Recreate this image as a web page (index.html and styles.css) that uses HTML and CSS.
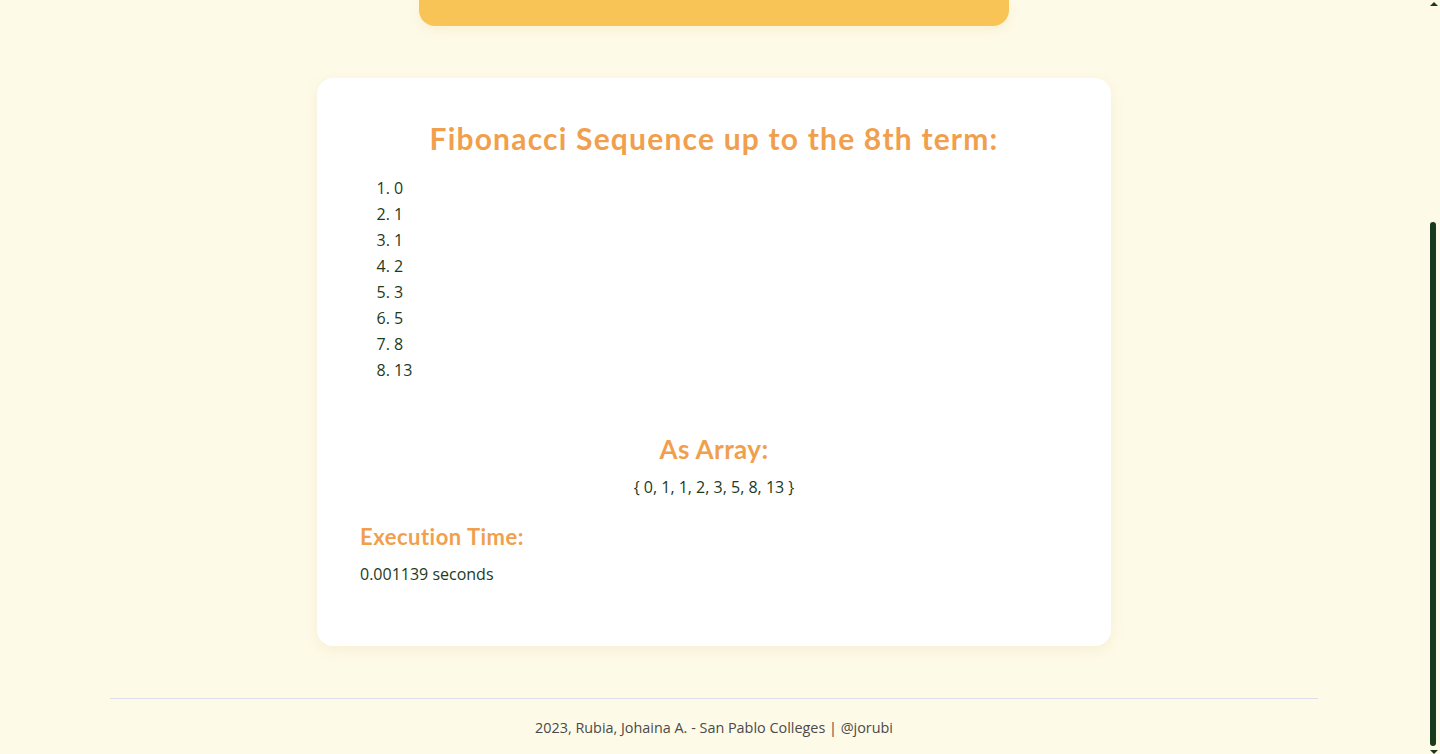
FILE: index.html
```html
<!DOCTYPE html>
<html lang="en">
<head>
<meta charset="utf-8">
<title>Fibonacci</title>
<link rel="stylesheet" href="styles.css">
</head>
<body>
<div class="page">
  <div class="banner"></div>
  <main class="card">
    <h2 class="title">Fibonacci Sequence up to the 8th term:</h2>
    <ol class="seq">
      <li>0</li>
      <li>1</li>
      <li>1</li>
      <li>2</li>
      <li>3</li>
      <li>5</li>
      <li>8</li>
      <li>13</li>
    </ol>
    <h3 class="sub">As Array:</h3>
    <p class="array">{ 0, 1, 1, 2, 3, 5, 8, 13 }</p>
    <h4 class="exec">Execution Time:</h4>
    <p class="time">0.001139 seconds</p>
  </main>
  <footer class="footer">
    <p>2023, Rubia, Johaina A. - San Pablo Colleges | @jorubi</p>
  </footer>
</div>
<div class="scrollbar">
  <span class="arrow up"></span>
  <span class="thumb"></span>
  <span class="arrow down"></span>
</div>
</body>
</html>
```
FILE: styles.css
```css
html, body {
  margin: 0;
  padding: 0;
  height: 754px;
  overflow: hidden;
}
body {
  background: #fefae8;
  font-family: "Open Sans", "Noto Sans", sans-serif;
  color: #1d3a22;
  position: relative;
}
.page {
  width: 1428px;
  display: flex;
  flex-direction: column;
  align-items: center;
}
.banner {
  width: 590px;
  height: 26px;
  background: #f7c455;
  border-radius: 0 0 16px 16px;
  box-shadow: 0 4px 12px rgba(200, 170, 60, 0.12);
}
.card {
  box-sizing: border-box;
  width: 794px;
  margin-top: 52px;
  background: #ffffff;
  border-radius: 16px;
  box-shadow: 0 4px 14px rgba(200, 180, 90, 0.14);
  padding: 41px 43px 59px;
}
.title {
  margin: 0;
  text-align: center;
  font-family: "Lato", sans-serif;
  font-weight: 700;
  font-size: 30px;
  line-height: 38px;
  letter-spacing: 1.2px;
  color: #f19f4d;
}
.seq {
  margin: 18px 0 0;
  padding-left: 34px;
  font-size: 16px;
  line-height: 26px;
}
.sub {
  margin: 49px 0 0;
  text-align: center;
  font-family: "Lato", sans-serif;
  font-weight: 700;
  font-size: 26px;
  line-height: 34px;
  letter-spacing: 0.4px;
  color: #f19f4d;
}
.array {
  margin: 8px 0 0;
  text-align: center;
  font-size: 16px;
  line-height: 26px;
}
.exec {
  margin: 22px 0 0;
  font-family: "Lato", sans-serif;
  font-weight: 700;
  font-size: 22px;
  line-height: 30px;
  letter-spacing: 0.5px;
  color: #f19f4d;
}
.time {
  margin: 9px 0 0;
  font-size: 16px;
  line-height: 26px;
}
.footer {
  width: 1208px;
  margin-top: 52px;
  border-top: 1px solid #dcdcea;
  text-align: center;
  font-size: 14.4px;
  color: #4a4a4a;
}
.footer p {
  margin: 18px 0 0;
  line-height: 22px;
}
.scrollbar {
  position: absolute;
  top: 0;
  right: 0;
  width: 12px;
  height: 754px;
  display: flex;
  flex-direction: column;
  align-items: center;
}
.arrow {
  width: 0;
  height: 0;
  border-left: 4px solid transparent;
  border-right: 4px solid transparent;
}
.arrow.up {
  margin-top: 2px;
  border-bottom: 4px solid #1a3a1e;
}
.arrow.down {
  margin-top: 4px;
  border-top: 4px solid #1a3a1e;
}
.thumb {
  margin-top: auto;
  width: 6px;
  height: 524px;
  border-radius: 3px;
  background: #1a3a1e;
  margin-left: -2px;
}
```
